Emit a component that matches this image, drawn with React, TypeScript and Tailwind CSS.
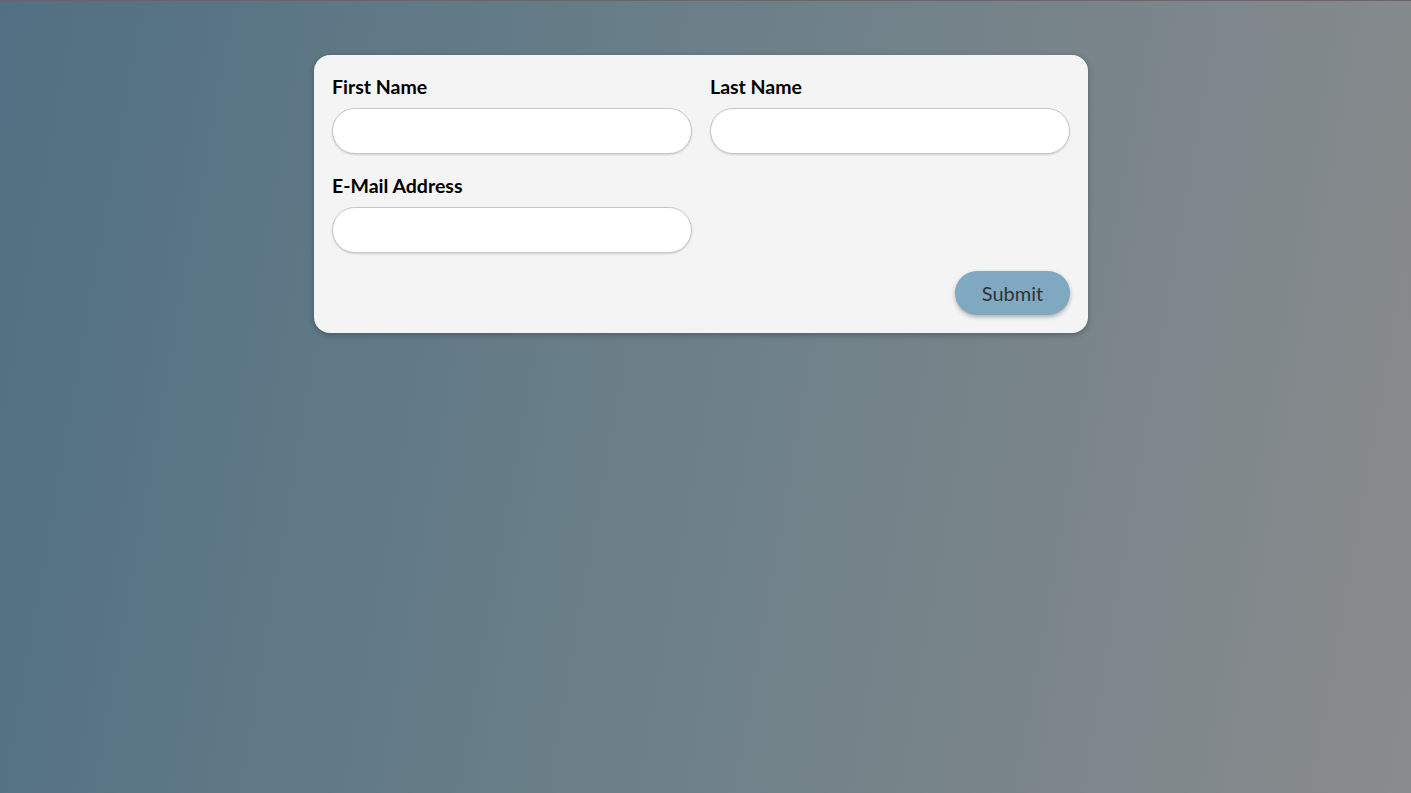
import React, { useState } from 'react'

export default function App() {
  const [form, setForm] = useState({ first: '', last: '', email: '' })

  const inputClass =
    'h-[46px] w-full rounded-full border border-[#c8c8c8] bg-white px-5 text-lg text-[#333] shadow-[0_1px_2px_rgba(0,0,0,0.15)] outline-none'

  return (
    <div
      className="min-h-[793px] w-full border-t border-[#6e6466] bg-[linear-gradient(100deg,#517083_0%,#6a7f88_45%,#898b8d_100%)] pt-[54px] pl-[314px]"
      style={{ fontFamily: '"Lato", "Noto Sans", sans-serif' }}
    >
      <form
        onSubmit={(e) => e.preventDefault()}
        className="w-[774px] rounded-2xl bg-[#f4f4f4] p-[18px] shadow-[0_2px_6px_rgba(0,0,0,0.25)]"
      >
        <div className="grid grid-cols-2 gap-x-[18px] gap-y-[18px]">
          <div>
            <label className="mb-[7px] block text-[19.5px] font-bold leading-[28px] text-black">First Name</label>
            <input
              className={inputClass}
              value={form.first}
              onChange={(e) => setForm({ ...form, first: e.target.value })}
            />
          </div>
          <div>
            <label className="mb-[7px] block text-[19.5px] font-bold leading-[28px] text-black">Last Name</label>
            <input
              className={inputClass}
              value={form.last}
              onChange={(e) => setForm({ ...form, last: e.target.value })}
            />
          </div>
          <div>
            <label className="mb-[7px] block text-[19.5px] font-bold leading-[28px] text-black">E-Mail Address</label>
            <input
              className={inputClass}
              value={form.email}
              onChange={(e) => setForm({ ...form, email: e.target.value })}
            />
          </div>
        </div>
        <div className="mt-[18px] flex justify-end">
          <button
            type="submit"
            className="h-[44px] w-[115px] rounded-full bg-[#7fa9c1] text-[20px] text-[#333] shadow-[0_2px_4px_rgba(0,0,0,0.3)]"
          >
            Submit
          </button>
        </div>
      </form>
    </div>
  )
}
